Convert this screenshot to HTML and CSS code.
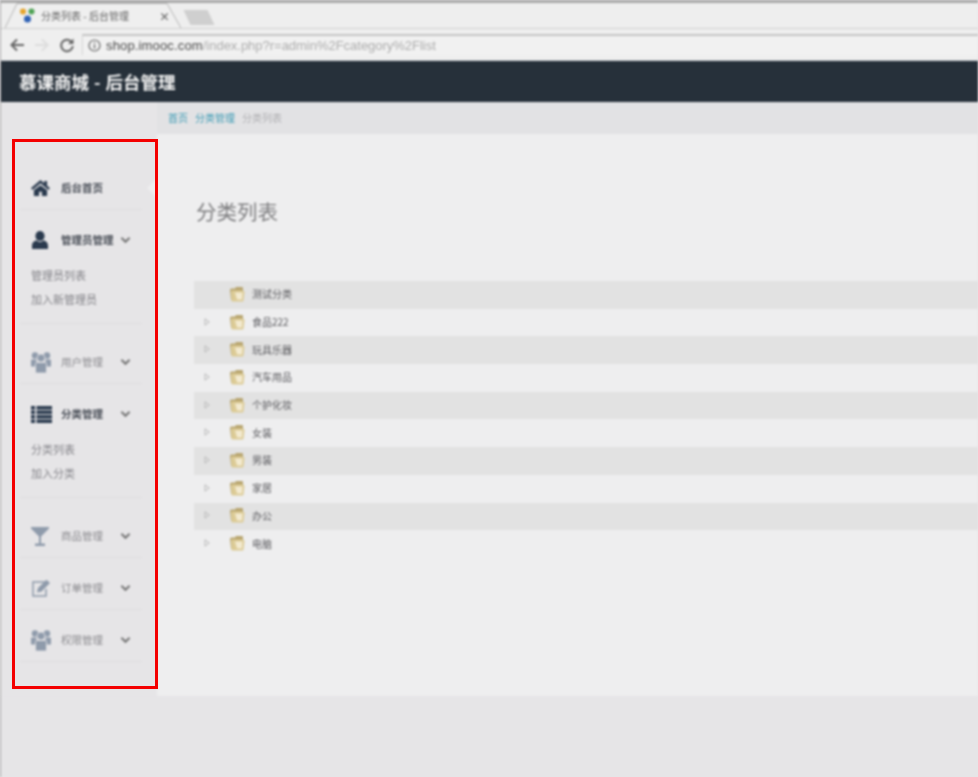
FILE: index.html
```html
<!DOCTYPE html>
<html lang="zh-CN">
<head>
<meta charset="UTF-8">
<meta name="viewport" content="width=device-width, initial-scale=1.0">
<title>分类列表 - 后台管理</title>
<link rel="stylesheet" href="styles.css">
</head>
<body>
<svg class="sprites" width="0" height="0">
    <symbol id="chevron" viewBox="0 0 12 8"><path d="M1.500 1.500 6 6l4.500-4.500" fill="none" stroke="currentColor" stroke-width="2.200"/></symbol>
    <symbol id="group" viewBox="0 0 20 21">
        <circle cx="4" cy="3.500" r="3.200"/><circle cx="16" cy="3.500" r="3.200"/>
        <path d="M0 8.500q0-1 1-1h4.500v7H0zM14.500 7.500H19q1 0 1 1v6h-5.500z"/>
        <circle cx="10" cy="6" r="4" stroke="#e6e5e7" stroke-width=".8"/>
        <path d="M4.500 11.500q0-1 1-1h9q1 0 1 1V20q0 1-1 1h-9q-1 0-1-1z" stroke="#e6e5e7" stroke-width=".8"/>
    </symbol>
    <symbol id="folder" viewBox="0 0 16 16">
        <path d="M1 4q0-1.500 1.500-1.500h3.500l1-1.500h6q1 0 1 1v12H3q-1 0-1-1z" fill="#b8a56f"/>
        <path d="M2 5.500q0-1 1-1h9.500q3 0 3 1.500l-1 8.500q0 1-1 1H3.500q-1 0-1-1z" fill="#dccb96"/>
        <path d="M6 6.500h7.500l-.5 7H8z" fill="#f3ead0"/>
    </symbol>
    <symbol id="arrow" viewBox="0 0 6 8"><path d="M1 .8v6.400L5.200 4z" fill="none" stroke="#b9b9b9"/></symbol>
</svg>

<div class="page">
    <div class="tabbar">
        <div class="tab">
            <svg class="tab-shape" width="176" height="25" viewBox="0 0 176 25"><path d="M0 25 12 .5h150L176 25" fill="#efefef" stroke="#b5b5b5"/></svg>
            <svg class="favicon" width="15" height="15" viewBox="0 0 15 15">
                <circle cx="3" cy="3.500" r="3" fill="#e6a52c"/>
                <circle cx="11.500" cy="3.500" r="3" fill="#4fa356"/>
                <circle cx="7.500" cy="11" r="3.500" fill="#2f62b5"/>
            </svg>
            <span class="tab-title">分类列表 - 后台管理</span>
            <span class="tab-close">×</span>
        </div>
        <div class="newtab"></div>
    </div>
    <div class="toolbar">
        <svg class="tool" width="16" height="14" viewBox="0 0 16 14"><path d="M15 7H3M8 1.500 2.500 7 8 12.500" fill="none" stroke="#666" stroke-width="2"/></svg>
        <svg class="tool" width="16" height="14" viewBox="0 0 16 14"><path d="M1 7h12M8 1.500 13.500 7 8 12.500" fill="none" stroke="#ddd" stroke-width="2"/></svg>
        <svg class="tool" width="16" height="16" viewBox="0 0 16 16"><path d="M13 5.500A5.800 5.800 0 1 0 13.800 9" fill="none" stroke="#666" stroke-width="2"/><path d="M14.500 1.500v5.500H9z" fill="#666"/></svg>
        <div class="urlbox">
            <svg width="13" height="13" viewBox="0 0 13 13"><circle cx="6.500" cy="6.500" r="5.500" fill="none" stroke="#666" stroke-width="1.200"/><path d="M6.500 5.500v4M6.500 3v1.300" stroke="#666" stroke-width="1.300"/></svg>
            <span class="url"><b>shop.imooc.com</b>/index.php?r=admin%2Fcategory%2Flist</span>
        </div>
    </div>

    <header class="topbar">慕课商城 - 后台管理</header>

    <div class="layout">
        <aside class="sidebar">
            <div class="nav-block first">
                <div class="nav-head active">
                    <svg class="nav-icon" width="19" height="16" viewBox="0 0 20 17"><path d="M10 0 0 8.500 1.500 10.500 10 3.500l8.500 7L20 8.500 17 6V1h-3v2.500zM3 11v6h5.500v-4.500h3V17H17v-6l-7-5.500z"/></svg>
                    <span class="nav-label">后台首页</span>
                </div>
                <i class="notch"></i>
            </div>
            <div class="nav-block">
                <div class="nav-head active">
                    <svg class="nav-icon" width="18" height="18" viewBox="0 0 18 18"><ellipse cx="9" cy="5" rx="4.600" ry="5"/><path d="M1 18v-3.500C1 11.500 3.500 9.500 6 9.500c1 1 2 1.500 3 1.500s2-.5 3-1.500c2.500 0 5 2 5 5V18z"/></svg>
                    <span class="nav-label">管理员管理</span>
                    <svg class="chev" width="11" height="8"><use href="#chevron"/></svg>
                </div>
                <ul class="subnav">
                    <li>管理员列表</li>
                    <li>加入新管理员</li>
                </ul>
            </div>
            <div class="nav-block after-open">
                <div class="nav-head">
                    <svg class="nav-icon" width="20" height="21"><use href="#group"/></svg>
                    <span class="nav-label">用户管理</span>
                    <svg class="chev" width="11" height="8"><use href="#chevron"/></svg>
                </div>
            </div>
            <div class="nav-block">
                <div class="nav-head active">
                    <svg class="nav-icon" width="21" height="17" viewBox="0 0 21 17"><path d="M0 0h4v3.500H0zM5.500 0H21v3.500H5.500zM0 4.500h4V8H0zM5.500 4.500H21V8H5.500zM0 9h4v3.500H0zM5.500 9H21v3.500H5.500zM0 13.500h4V17H0zM5.500 13.500H21V17H5.500z"/></svg>
                    <span class="nav-label">分类管理</span>
                    <svg class="chev" width="11" height="8"><use href="#chevron"/></svg>
                </div>
                <ul class="subnav">
                    <li>分类列表</li>
                    <li>加入分类</li>
                </ul>
            </div>
            <div class="nav-block after-open">
                <div class="nav-head">
                    <svg class="nav-icon" width="18" height="19" viewBox="0 0 18 19"><path d="M0 0h18v1.500L10 9.500V16.500h4V19H4v-2.500h4V9.500L0 1.500z"/></svg>
                    <span class="nav-label">商品管理</span>
                    <svg class="chev" width="11" height="8"><use href="#chevron"/></svg>
                </div>
            </div>
            <div class="nav-block">
                <div class="nav-head">
                    <svg class="nav-icon" width="20" height="18" viewBox="0 0 20 18"><path d="M14 3H2v14h13V10" fill="none" stroke="currentColor" stroke-width="1.500"/><path d="M7 9 15.500 .8 19 4l-8.500 8.500L6 13.500z"/></svg>
                    <span class="nav-label">订单管理</span>
                    <svg class="chev" width="11" height="8"><use href="#chevron"/></svg>
                </div>
            </div>
            <div class="nav-block">
                <div class="nav-head">
                    <svg class="nav-icon" width="20" height="21"><use href="#group"/></svg>
                    <span class="nav-label">权限管理</span>
                    <svg class="chev" width="11" height="8"><use href="#chevron"/></svg>
                </div>
            </div>
        </aside>

        <div class="main">
            <div class="breadcrumb"><a>首页</a><a>分类管理</a><span>分类列表</span></div>
            <div class="content">
                <h2 class="page-title">分类列表</h2>
                <ul class="tree">
                    <li><i class="tree-arrow none"></i><svg width="16" height="16"><use href="#folder"/></svg><span>测试分类</span></li>
                    <li><svg class="tree-arrow" width="6" height="8"><use href="#arrow"/></svg><svg width="16" height="16"><use href="#folder"/></svg><span>食品222</span></li>
                    <li><svg class="tree-arrow" width="6" height="8"><use href="#arrow"/></svg><svg width="16" height="16"><use href="#folder"/></svg><span>玩具乐器</span></li>
                    <li><svg class="tree-arrow" width="6" height="8"><use href="#arrow"/></svg><svg width="16" height="16"><use href="#folder"/></svg><span>汽车用品</span></li>
                    <li><svg class="tree-arrow" width="6" height="8"><use href="#arrow"/></svg><svg width="16" height="16"><use href="#folder"/></svg><span>个护化妆</span></li>
                    <li><svg class="tree-arrow" width="6" height="8"><use href="#arrow"/></svg><svg width="16" height="16"><use href="#folder"/></svg><span>女装</span></li>
                    <li><svg class="tree-arrow" width="6" height="8"><use href="#arrow"/></svg><svg width="16" height="16"><use href="#folder"/></svg><span>男装</span></li>
                    <li><svg class="tree-arrow" width="6" height="8"><use href="#arrow"/></svg><svg width="16" height="16"><use href="#folder"/></svg><span>家居</span></li>
                    <li><svg class="tree-arrow" width="6" height="8"><use href="#arrow"/></svg><svg width="16" height="16"><use href="#folder"/></svg><span>办公</span></li>
                    <li><svg class="tree-arrow" width="6" height="8"><use href="#arrow"/></svg><svg width="16" height="16"><use href="#folder"/></svg><span>电脑</span></li>
                </ul>
            </div>
        </div>
    </div>
</div>

<div class="highlight"></div>
</body>
</html>
```

FILE: styles.css
```css
html, body {
    margin: 0;
    padding: 0;
    background-color: #e6e5e7;
}

body {
    position: relative;
    height: 777px;
    overflow: hidden;
    font-family: "Noto Sans CJK SC", "Liberation Sans", sans-serif;
}

ul {
    list-style: none;
    margin: 0;
    padding: 0;
}

.sprites {
    position: absolute;
}

.page {
    height: 777px;
    box-sizing: border-box;
    border-top: 3px solid #a9a9a9;
    border-left: 1px solid #a9a9a9;
    filter: blur(0.9px);
}

/* browser chrome */
.tabbar {
    display: flex;
    align-items: flex-end;
    height: 25px;
    padding-left: 4px;
    background-color: #eeeeee;
    box-sizing: border-box;
}

.tab {
    position: relative;
    display: flex;
    align-items: center;
    width: 176px;
    height: 25px;
    padding-left: 15px;
    box-sizing: border-box;
}

.tab-shape {
    position: absolute;
    left: 0;
    top: 0;
}

.favicon {
    position: relative;
    margin-right: 6px;
}

.tab-title {
    position: relative;
    width: 108px;
    font-size: 10px;
    color: #666;
    white-space: nowrap;
}

.tab-close {
    position: relative;
    margin-left: 10px;
    font-size: 11px;
    font-weight: bold;
    color: #666;
}

.newtab {
    width: 24px;
    height: 15px;
    margin: 0 0 3px 6px;
    background-color: #cfcfcf;
    transform: skewX(25deg);
}

.toolbar {
    display: flex;
    align-items: center;
    height: 33px;
    padding: 5px 0 5px 8px;
    box-sizing: border-box;
    background-color: #efefef;
    border-top: 1px solid #cfcfcf;
    border-bottom: 1px solid #c6c9ce;
}

.tool {
    margin-right: 9px;
}

.tool:nth-child(3) {
    margin-right: 7px;
}

.urlbox {
    display: flex;
    flex: 1;
    align-items: center;
    align-self: stretch;
    gap: 5px;
    padding-left: 5px;
    background-color: #f1f1f1;
    border-top: 2px solid #c4c4c4;
    border-left: 1px solid #d4d4d4;
}

.url {
    font-family: "Liberation Sans", sans-serif;
    font-size: 13px;
    letter-spacing: -0.02px;
    color: #adadad;
}

.url b {
    font-weight: normal;
    letter-spacing: 0.15px;
    color: #4a4a4a;
}

.topbar {
    height: 41px;
    padding-left: 18px;
    background-color: #26303a;
    color: #f2f2f2;
    font-size: 17.500px;
    font-weight: bold;
    word-spacing: 1px;
    line-height: 41px;
    box-sizing: border-box;
}

/* page body */
.layout {
    display: flex;
}

.sidebar {
    width: 156px;
    flex: none;
    padding: 65px 15px 0 19px;
    box-sizing: border-box;
    background-color: #e6e5e7;
}

.nav-block {
    position: relative;
    padding-top: 9px;
    border-bottom: 1px solid #dedddf;
}

.nav-block.first {
    padding-top: 0;
}

.nav-block.after-open {
    padding-top: 17px;
}

.nav-head {
    display: flex;
    align-items: center;
    height: 42px;
    color: #8f9bab;
    fill: #8f9bab;
}

.nav-head.active {
    color: #2a3a4e;
    fill: #2a3a4e;
}

.nav-icon {
    flex: none;
    margin-left: 11px;
}

.nav-label {
    position: absolute;
    left: 41px;
    margin-bottom: 2px;
    font-size: 10.500px;
    color: #8c8c90;
}

.active .nav-label {
    color: #4a4f58;
    font-weight: bold;
}

.chev {
    position: absolute;
    left: 100px;
    color: #777;
}

.notch {
    position: absolute;
    right: -14px;
    top: 12px;
    border: 9px solid transparent;
    border-right-color: #eeeeef;
    border-left-width: 0;
}

.subnav {
    margin-top: 2px;
    padding: 0 0 12px 11px;
    font-size: 11px;
    line-height: 24px;
    color: #85858a;
}

.main {
    flex: 1;
    min-width: 0;
}

.breadcrumb {
    display: flex;
    gap: 7px;
    height: 32px;
    padding-left: 11px;
    font-size: 10px;
    line-height: 32px;
    color: #b0b0b3;
    background-color: #e2e2e4;
    box-sizing: border-box;
}

.breadcrumb a {
    color: #3f9cb5;
}

.content {
    height: 562px;
    padding: 65px 0 0 37px;
    box-sizing: border-box;
    background-color: #eeeeef;
}

.page-title {
    margin: 0 0 58px 2px;
    font-size: 20.500px;
    font-weight: normal;
    line-height: 24px;
    color: #7d7d7f;
}

.tree li {
    display: flex;
    align-items: center;
    height: 27.700px;
    padding-bottom: 2px;
    box-sizing: border-box;
    font-size: 10px;
    color: #5c5c60;
}

.tree li:nth-child(odd) {
    background-color: #e2e2e2;
}

.tree-arrow {
    flex: none;
    margin: 0 19px 0 10px;
}

.tree-arrow.none {
    width: 6px;
}

.tree span {
    margin-left: 7px;
}

/* red annotation over the screenshot */
.highlight {
    position: absolute;
    left: 12px;
    top: 139px;
    width: 146px;
    height: 550px;
    box-sizing: border-box;
    border: 3px solid #f40000;
}
```
